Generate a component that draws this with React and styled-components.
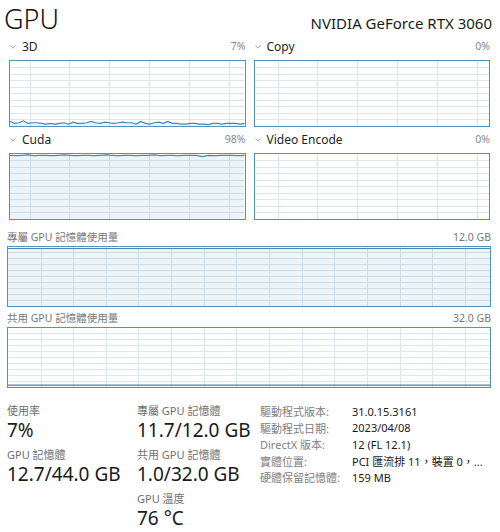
import React from 'react';
import styled, { createGlobalStyle } from 'styled-components';

const BORDER = '#5193bd';
const GRID = '#dbe6ee';
const LINE = '#4886b0';
const FILL = 'rgba(81,147,189,0.10)';

const Global = createGlobalStyle`
  html, body { margin: 0; padding: 0; background: #fff; }
  body {
    font-family: "Noto Sans", "Noto Sans CJK TC", sans-serif;
    color: #1f1f1f;
  }
`;

const Page = styled.div`
  width: 500px;
  height: 532px;
  overflow: hidden;
  background: #fff;
`;

const Header = styled.div`
  display: flex;
  justify-content: space-between;
  align-items: baseline;
  height: 39px;
  padding: 0 8px 0 4px;
`;

const Title = styled.div`
  font-size: 27px;
  font-weight: 300;
  line-height: 37px;
  color: #111;
`;

const Model = styled.div`
  font-size: 15px;
  color: #1a1a1a;
`;

const EngineGrid = styled.div`
  display: grid;
  grid-template-columns: 1fr 1fr;
  column-gap: 8px;
  row-gap: 5px;
  padding: 0 10px 0 9px;
`;

const Cell = styled.div`
  display: flex;
  flex-direction: column;
`;

const LabelRow = styled.div`
  display: flex;
  align-items: center;
  justify-content: space-between;
  height: ${p => p.$h || 14}px;
  margin-bottom: ${p => p.$gap || 7}px;
`;

const Name = styled.div`
  display: flex;
  align-items: center;
  font-size: 12px;
  color: #1f1f1f;
`;

const Chevron = styled.svg`
  width: 6px;
  height: 4px;
  margin: 1px 6px 0 1px;
`;

const Pct = styled.div`
  font-size: 10.5px;
  color: #8a8a8a;
`;

const ChartBox = styled.div`
  height: ${p => p.$h}px;
  border: 1px solid ${BORDER};
  box-sizing: border-box;
  background: #fff;
  line-height: 0;
  svg { display: block; width: 100%; height: 100%; }
`;

const MemSection = styled.div`
  display: flex;
  flex-direction: column;
  gap: 5px;
  padding: 11px 9px 0 7px;
`;

const MemLabel = styled.div`
  font-size: 10.5px;
  color: #777;
  line-height: 12px;
`;

const Stats = styled.div`
  display: grid;
  grid-template-columns: 130px 123px 1fr;
  padding: 16px 0 0 7px;
`;

const StatCol = styled.div`
  display: flex;
  flex-direction: column;
  gap: 6px;
`;

const Stat = styled.div`
  display: flex;
  flex-direction: column;
`;

const StatLabel = styled.div`
  font-size: 11px;
  line-height: 14px;
  color: #707070;
`;

const StatValue = styled.div`
  font-size: 19px;
  line-height: 24px;
  color: #1a1a1a;
`;

const InfoTable = styled.div`
  display: grid;
  grid-template-columns: 92px 1fr;
  grid-auto-rows: 16.5px;
  align-items: center;
  margin-top: -1px;
  font-size: 11px;
`;

const InfoKey = styled.div`
  color: #808080;
  white-space: nowrap;
`;

const InfoVal = styled.div`
  color: #1a1a1a;
  white-space: nowrap;
`;

function Chart({ w, h, vOffset, vStep, hDiv, data }) {
  const iw = w - 2;
  const ih = h - 2;
  const verts = [];
  for (let x = vOffset; x < iw; x += vStep) verts.push(x);
  const hors = [];
  for (let i = 1; i < hDiv; i++) hors.push((ih * i) / hDiv);
  let linePts = null;
  let areaPts = null;
  if (data) {
    const n = data.length;
    const pts = data.map((v, i) => [(iw * i) / (n - 1), ih - (ih * v) / 100]);
    linePts = pts.map(p => `${p[0].toFixed(2)},${p[1].toFixed(2)}`).join(' ');
    areaPts = `0,${ih} ${linePts} ${iw},${ih}`;
  }
  return (
    <ChartBox $h={h}>
      <svg viewBox={`0 0 ${iw} ${ih}`} preserveAspectRatio="none">
        <g stroke={GRID} strokeWidth="1" shapeRendering="crispEdges">
          {verts.map(x => (
            <line key={'v' + x} x1={x} y1="0" x2={x} y2={ih} />
          ))}
          {hors.map(y => (
            <line key={'h' + y} x1="0" y1={y} x2={iw} y2={y} />
          ))}
        </g>
        {data && (
          <>
            <polygon points={areaPts} fill={FILL} />
            <polyline points={linePts} fill="none" stroke={LINE} strokeWidth="1.2" />
          </>
        )}
      </svg>
    </ChartBox>
  );
}

const d3 = [7, 4, 5, 8, 4, 5, 5, 4, 3, 4, 3, 4, 5, 3, 6, 4, 4, 5, 7, 5, 4, 6, 5, 4, 5, 6, 5, 5, 3, 7, 4, 3, 5, 6, 4, 7, 4, 4, 3, 3, 4, 4, 3, 3, 2, 4, 4, 3, 4, 4, 4, 3, 4];
const dCuda = [98, 97.5, 98, 98.5, 97.5, 98, 98, 97.5, 98, 98.5, 98, 97.5, 98, 98, 97.5, 98, 98.5, 98, 97.5, 98, 98, 97.5, 98, 98, 98.5, 97.5, 98, 98, 97.5, 98, 98, 98, 96, 98, 97.5, 98, 98, 98, 97.5, 98];
const dDed = Array.from({ length: 40 }, () => 97.5);
const dShared = Array.from({ length: 40 }, () => 3.2);

function Chev() {
  return (
    <Chevron viewBox="0 0 6 4">
      <polyline points="0.5,0.5 3,3.2 5.5,0.5" fill="none" stroke="#9a9a9a" strokeWidth="0.9" />
    </Chevron>
  );
}

function Engine({ name, pct, data, vOffset }) {
  return (
    <Cell>
      <LabelRow>
        <Name>
          <Chev />
          {name}
        </Name>
        <Pct>{pct}</Pct>
      </LabelRow>
      <Chart w={236} h={67} vOffset={vOffset} vStep={39.8} hDiv={10} data={data} />
    </Cell>
  );
}

function MemChart({ label, total, data }) {
  return (
    <Cell>
      <LabelRow $h={12} $gap={3}>
        <MemLabel>{label}</MemLabel>
        <MemLabel>{total}</MemLabel>
      </LabelRow>
      <Chart w={484} h={61} vOffset={33} vStep={32.65} hDiv={10} data={data} />
    </Cell>
  );
}

export default function App() {
  return (
    <Page>
      <Global />
      <Header>
        <Title>GPU</Title>
        <Model>NVIDIA GeForce RTX 3060</Model>
      </Header>
      <EngineGrid>
        <Engine name="3D" pct="7%" data={d3} vOffset={20} />
        <Engine name="Copy" pct="0%" vOffset={23} />
        <Engine name="Cuda" pct="98%" data={dCuda} vOffset={20} />
        <Engine name="Video Encode" pct="0%" vOffset={23} />
      </EngineGrid>
      <MemSection>
        <MemChart label="專屬 GPU 記憶體使用量" total="12.0 GB" data={dDed} />
        <MemChart label="共用 GPU 記憶體使用量" total="32.0 GB" data={dShared} />
      </MemSection>
      <Stats>
        <StatCol>
          <Stat>
            <StatLabel>使用率</StatLabel>
            <StatValue>7%</StatValue>
          </Stat>
          <Stat>
            <StatLabel>GPU 記憶體</StatLabel>
            <StatValue>12.7/44.0 GB</StatValue>
          </Stat>
        </StatCol>
        <StatCol>
          <Stat>
            <StatLabel>專屬 GPU 記憶體</StatLabel>
            <StatValue>11.7/12.0 GB</StatValue>
          </Stat>
          <Stat>
            <StatLabel>共用 GPU 記憶體</StatLabel>
            <StatValue>1.0/32.0 GB</StatValue>
          </Stat>
          <Stat>
            <StatLabel>GPU 溫度</StatLabel>
            <StatValue>76 °C</StatValue>
          </Stat>
        </StatCol>
        <InfoTable>
          <InfoKey>驅動程式版本:</InfoKey>
          <InfoVal>31.0.15.3161</InfoVal>
          <InfoKey>驅動程式日期:</InfoKey>
          <InfoVal>2023/04/08</InfoVal>
          <InfoKey>DirectX 版本:</InfoKey>
          <InfoVal>12 (FL 12.1)</InfoVal>
          <InfoKey>實體位置:</InfoKey>
          <InfoVal>PCI 匯流排 11，裝置 0，...</InfoVal>
          <InfoKey>硬體保留記憶體:</InfoKey>
          <InfoVal>159 MB</InfoVal>
        </InfoTable>
      </Stats>
    </Page>
  );
}
